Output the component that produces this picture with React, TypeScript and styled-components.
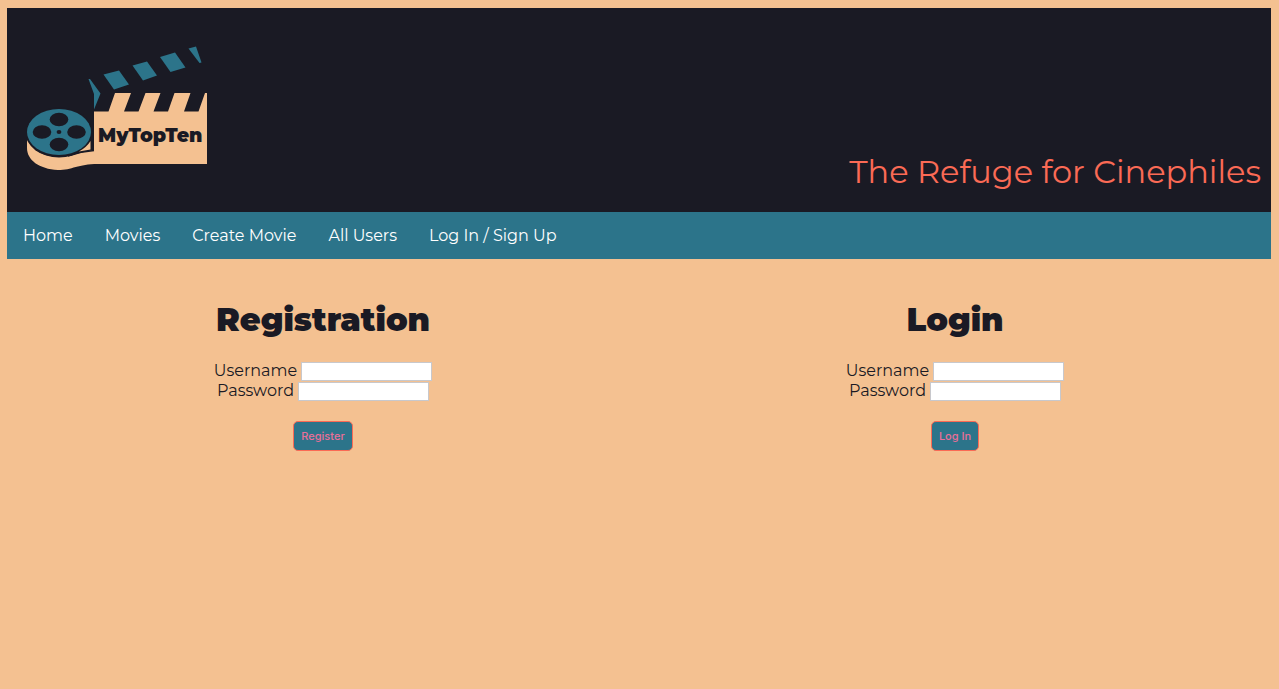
import React from "react";
import styled, { createGlobalStyle } from "styled-components";

const ink = "#1a1a24";
const teal = "#2c748a";
const sand = "#f4c191";
const coral = "#fb6a55";

const GlobalStyle = createGlobalStyle`
  * { box-sizing: border-box; }
  body {
    margin: 0;
    background: ${sand};
    color: ${ink};
    font-family: Montserrat, Inter, sans-serif;
    font-size: 16px;
    line-height: 20px;
  }
`;

const Page = styled.div`
  padding: 8px 8px 8px 7px;
`;

const Banner = styled.header`
  display: flex;
  justify-content: space-between;
  align-items: flex-end;
  padding: 0 10px 20px 20px;
  min-height: 204px;
  background: ${ink};
`;

const LogoLink = styled.a`
  display: block;
  height: 150px;
  svg { display: block; }
`;

const Tagline = styled.p`
  margin: 0;
  color: ${coral};
  font-size: 32px;
  line-height: 40px;
`;

const Nav = styled.nav`
  display: flex;
  flex-wrap: wrap;
  background: ${teal};
`;

const NavLink = styled.a`
  padding: 14px 16px 13px;
  color: #fff;
  text-decoration: none;
`;

const Columns = styled.main`
  display: grid;
  grid-template-columns: 1fr 1fr;
  padding-top: 41px;
`;

const Form = styled.form`
  display: flex;
  flex-direction: column;
  align-items: center;
`;

const Title = styled.h1`
  margin: 0 0 22px;
  font-size: 32px;
  line-height: 40px;
  font-weight: 900;
`;

const Field = styled.label`
  display: flex;
  align-items: flex-start;
  gap: 4px;
  height: 20px;
  line-height: 18px;
`;

const Input = styled.input`
  width: 131px;
  height: 19px;
  padding: 1px 2px;
  border: 1px solid #c8c8cc;
  background: #fff;
  font: inherit;
  font-size: 13px;
`;

const Submit = styled.button`
  margin-top: 19px;
  height: 30px;
  padding: 0 7px;
  border: 1px solid ${coral};
  border-radius: 5px;
  background: ${teal};
  color: #ea6f98;
  font-family: Inter, sans-serif;
  font-size: 11px;
  font-weight: 500;
`;

const LogoText = styled.text`
  font-family: "Broadway", Montserrat, sans-serif;
  font-weight: 900;
  font-size: 19px;
  fill: ${ink};
`;

function Logo() {
  return (
    <svg width="181" height="150" viewBox="27 42 181 150" role="img" aria-label="MyTopTen">
      <g fill={teal}>
        <path d="M88.500 79 L90 79 L100.500 93.500 L94 109.500 V94 Z" />
        <path d="M103.500 74.500 L119 70.500 L129 84.500 L114 89.500 Z" />
        <path d="M132.500 65.500 L147 61.500 L157 75.500 L143 80.500 Z" />
        <path d="M160 57 L175 52.500 L185.500 67.500 L170.500 72 Z" />
        <path d="M188.500 48.500 L196 46.500 L201.500 62.500 L199.500 63 Z" />
      </g>
      <path
        fill={sand}
        d="M27 139 C34 154 51 159 68 156 C78 154 84 151 94 150.500 V111.500 H108.500 L115 93 H131 L124 111.500 H138.500 L145.500 93 H160.500 L153.500 111.500 H168 L174.500 93 H190.500 L184 111.500 H198.500 L205 93 H207 V164 H102 C79 163 73 170 58 170 C39 169 27 160 27 148 Z"
      />
      <path fill="none" stroke={ink} strokeWidth="1.500" d="M68 156 Q81 151.500 94 150.500" />
      <ellipse cx="59" cy="132.500" rx="33.500" ry="25" fill={ink} />
      <path fill={sand} d="M90.500 141 V149.500 L79 151.500 Q87 147 90.500 141 Z" />
      <ellipse cx="59" cy="132" rx="32" ry="23" fill={teal} />
      <g fill={ink}>
        <ellipse cx="59" cy="119.500" rx="9.300" ry="6.800" />
        <ellipse cx="42" cy="132" rx="9.300" ry="6.800" />
        <ellipse cx="76.500" cy="132" rx="9.300" ry="6.800" />
        <ellipse cx="59" cy="144.500" rx="9.300" ry="6.800" />
        <ellipse cx="59" cy="132" rx="2.400" ry="1.900" />
      </g>
      <LogoText x="98" y="142">MyTopTen</LogoText>
    </svg>
  );
}

const links = ["Home", "Movies", "Create Movie", "All Users", "Log In / Sign Up"];

function AccountForm({ title, action, id }: { title: string; action: string; id: string }) {
  return (
    <Form onSubmit={(e) => e.preventDefault()}>
      <Title>{title}</Title>
      <Field htmlFor={`${id}-username`}>
        Username
        <Input id={`${id}-username`} type="text" />
      </Field>
      <Field htmlFor={`${id}-password`}>
        Password
        <Input id={`${id}-password`} type="password" />
      </Field>
      <Submit type="submit">{action}</Submit>
    </Form>
  );
}

export default function App() {
  return (
    <Page>
      <GlobalStyle />
      <Banner>
        <LogoLink href="#home">
          <Logo />
        </LogoLink>
        <Tagline>The Refuge for Cinephiles</Tagline>
      </Banner>
      <Nav>
        {links.map((label) => (
          <NavLink key={label} href="#nav">{label}</NavLink>
        ))}
      </Nav>
      <Columns>
        <AccountForm id="register" title="Registration" action="Register" />
        <AccountForm id="login" title="Login" action="Log In" />
      </Columns>
    </Page>
  );
}
